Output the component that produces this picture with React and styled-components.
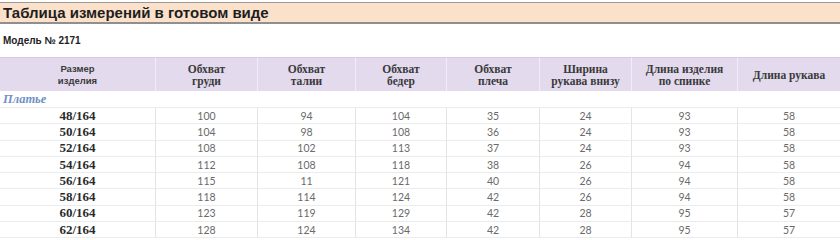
import styled, { createGlobalStyle } from 'styled-components';

const Global = createGlobalStyle`
  html, body {
    margin: 0;
    padding: 0;
    background: #ffffff;
    width: 840px;
    height: 240px;
    overflow: hidden;
  }
`

const Page = styled.div`
  width: 840px;
  height: 240px;
  padding-top: 2px;
  box-sizing: border-box;
  background: #fff;
`

const TitleBar = styled.div`
  height: 19px;
  background: #fbe1ca;
  border-top: 1px solid #9a9a9a;
  border-bottom: 2px solid #8f8f8f;
  display: flex;
  align-items: center;
  padding-left: 3px;
  font-family: "Liberation Sans", Arial, sans-serif;
  font-weight: bold;
  font-size: 15px;
  color: #1e1e1e;
`

const Model = styled.div`
  height: 33px;
  display: flex;
  align-items: center;
  padding-left: 3px;
  font-family: "Liberation Sans", Arial, sans-serif;
  font-weight: bold;
  font-size: 10px;
  color: #222;
`

const Grid = styled.div`
  display: grid;
  grid-template-columns: 155px 102px 98px 91px 93px 92px 106px 103px;
`

const Head = styled.div`
  height: 34px;
  background: #e3daee;
  border-top: 1px solid #d4c9e1;
  border-left: ${({ first }) => (first ? 'none' : '1px solid #f1ecf6')};
  display: flex;
  align-items: center;
  justify-content: center;
  text-align: center;
  color: #3a3a3a;
  font-family: ${({ sans }) => (sans ? '"Liberation Sans", Arial, sans-serif' : '"Liberation Serif", "Times New Roman", serif')};
  font-weight: bold;
  font-size: ${({ sans }) => (sans ? '9.5px' : '11.5px')};
  line-height: ${({ sans }) => (sans ? '12px' : '12.5px')};
  padding-top: 1px;
  box-sizing: border-box;
`

const Group = styled.div`
  grid-column: 1 / -1;
  height: 16px;
  display: flex;
  align-items: center;
  padding-left: 3px;
  font-family: "Liberation Serif", "Times New Roman", serif;
  font-style: italic;
  font-weight: bold;
  font-size: 12.5px;
  color: #7090c8;
  border-bottom: 1px solid #ececec;
`

const Cell = styled.div`
  height: 16.3px;
  box-sizing: border-box;
  border-bottom: 1px solid #ececec;
  border-left: ${({ first }) => (first ? 'none' : '1px solid #e4e4e4')};
  display: flex;
  align-items: center;
  justify-content: center;
  font-family: ${({ size }) => (size ? '"Liberation Serif", "Times New Roman", serif' : 'Lato, "Open Sans", sans-serif')};
  font-weight: ${({ size }) => (size ? 'bold' : 'normal')};
  font-size: ${({ size }) => (size ? '13px' : '10.5px')};
  color: ${({ size }) => (size ? '#2a2a2a' : '#6a6a6a')};
`

const headers = [
  ['Размер', 'изделия'],
  ['Обхват', 'груди'],
  ['Обхват', 'талии'],
  ['Обхват', 'бедер'],
  ['Обхват', 'плеча'],
  ['Ширина', 'рукава внизу'],
  ['Длина изделия', 'по спинке'],
  ['Длина рукава'],
]

const rows = [
  ['48/164', 100, 94, 104, 35, 24, 93, 58],
  ['50/164', 104, 98, 108, 36, 24, 93, 58],
  ['52/164', 108, 102, 113, 37, 24, 93, 58],
  ['54/164', 112, 108, 118, 38, 26, 94, 58],
  ['56/164', 115, 11, 121, 40, 26, 94, 58],
  ['58/164', 118, 114, 124, 42, 26, 94, 58],
  ['60/164', 123, 119, 129, 42, 28, 95, 57],
  ['62/164', 128, 124, 134, 42, 28, 95, 57],
]

export default function App() {
  return (
    <Page>
      <Global />
      <TitleBar>Таблица измерений в готовом виде</TitleBar>
      <Model>Модель № 2171</Model>
      <Grid>
        {headers.map((h, i) => (
          <Head key={i} first={i === 0} sans={i === 0}>
            <div>
              {h.map((line, j) => (
                <div key={j}>{line}</div>
              ))}
            </div>
          </Head>
        ))}
        <Group>Платье</Group>
        {rows.map((r) =>
          r.map((v, i) => (
            <Cell key={r[0] + i} first={i === 0} size={i === 0}>
              {v}
            </Cell>
          ))
        )}
      </Grid>
    </Page>
  )
}
